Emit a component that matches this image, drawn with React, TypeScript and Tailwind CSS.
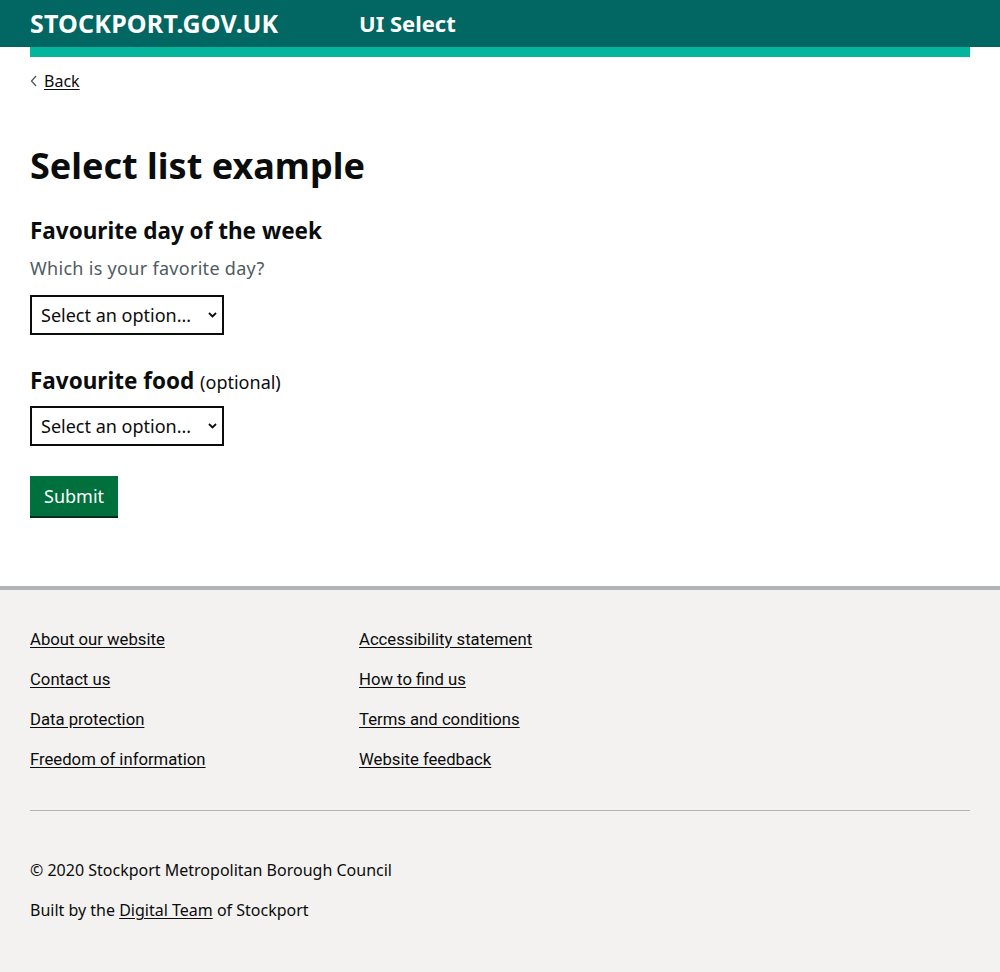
const primaryLinks = ['About our website', 'Contact us', 'Data protection', 'Freedom of information'];
const secondaryLinks = ['Accessibility statement', 'How to find us', 'Terms and conditions', 'Website feedback'];

const SelectBox = () => (
  <div className="relative w-[194px] h-10 border-2 border-[#0b0c0c] bg-white">
    <select className="appearance-none w-full h-full pl-[9px] pr-6 text-[18px] text-[#0b0c0c] bg-transparent outline-none">
      <option>Select an option...</option>
    </select>
    <svg
      className="absolute right-[5px] top-[15px] pointer-events-none"
      width="9"
      height="6"
      viewBox="0 0 9 6"
      fill="none">
      <path d="M1 1l3.5 3.5L8 1" stroke="#0b0c0c" strokeWidth="1.8" />
    </svg>
  </div>
);

export default function App() {
  return (
    <div className="min-h-[972px] flex flex-col bg-white text-[#0b0c0c] font-['Noto_Sans',sans-serif]">
      <header className="bg-[#026663]">
        <div className="h-[47px] px-[30px] flex items-center text-white font-bold">
          <span className="text-[25px] tracking-[0.2px] w-[329px]">STOCKPORT.GOV.UK</span>
          <span className="text-[22px]">UI Select</span>
        </div>
      </header>
      <div className="px-[30px] bg-white">
        <div className="h-[10px] bg-[#02b59c]" />
      </div>

      <main className="px-[30px] pb-[70px]">
        <a href="#" className="mt-[12px] inline-flex items-center gap-[6px] text-[16px] text-[#0b0c0c]">
          <svg width="8" height="12" viewBox="0 0 8 12" fill="none">
            <path d="M6 1L1.5 6 6 11" stroke="#505a5f" strokeWidth="1.3" />
          </svg>
          <span className="underline underline-offset-2">Back</span>
        </a>

        <h1 className="mt-[51px] text-[36px] font-bold leading-[44px]">Select list example</h1>

        <h2 className="mt-[28px] text-[22.5px] font-bold leading-[30px]">Favourite day of the week</h2>
        <p className="mt-[10px] text-[18px] tracking-[0.3px] leading-[24px] text-[#505a5f]">Which is your favorite day?</p>
        <div className="mt-[15px]">
          <SelectBox />
        </div>

        <h2 className="mt-[31px] text-[22.5px] font-bold leading-[30px]">
          Favourite food <span className="text-[18px] font-normal">(optional)</span>
        </h2>
        <div className="mt-[9px]">
          <SelectBox />
        </div>

        <button className="mt-[30px] h-10 px-[14px] bg-[#00703c] text-white text-[18px] shadow-[0_2px_0_#002d18]">
          Submit
        </button>
      </main>

      <footer className="flex-1 bg-[#f3f2f1] border-t-[4px] border-[#b1b4b6] px-[30px] pt-[38px] pb-[40px]">
        <div className="flex text-[16.7px] font-['Roboto',sans-serif]">
          <ul className="w-[329px] flex flex-col gap-[16px]">
            {primaryLinks.map((l) => (
              <li key={l} className="leading-[24px]">
                <a href="#" className="underline underline-offset-2 text-[#0b0c0c]">{l}</a>
              </li>
            ))}
          </ul>
          <ul className="flex flex-col gap-[16px]">
            {secondaryLinks.map((l) => (
              <li key={l} className="leading-[24px]">
                <a href="#" className="underline underline-offset-2 text-[#0b0c0c]">{l}</a>
              </li>
            ))}
          </ul>
        </div>
        <hr className="mt-[38px] border-0 border-t border-[#b1b4b6]" />
        <p className="mt-[47px] text-[16px] leading-[24px]">© 2020 Stockport Metropolitan Borough Council</p>
        <p className="mt-[16px] text-[16px] leading-[24px]">
          Built by the <a href="#" className="underline underline-offset-2">Digital Team</a> of Stockport
        </p>
      </footer>
    </div>
  );
}
